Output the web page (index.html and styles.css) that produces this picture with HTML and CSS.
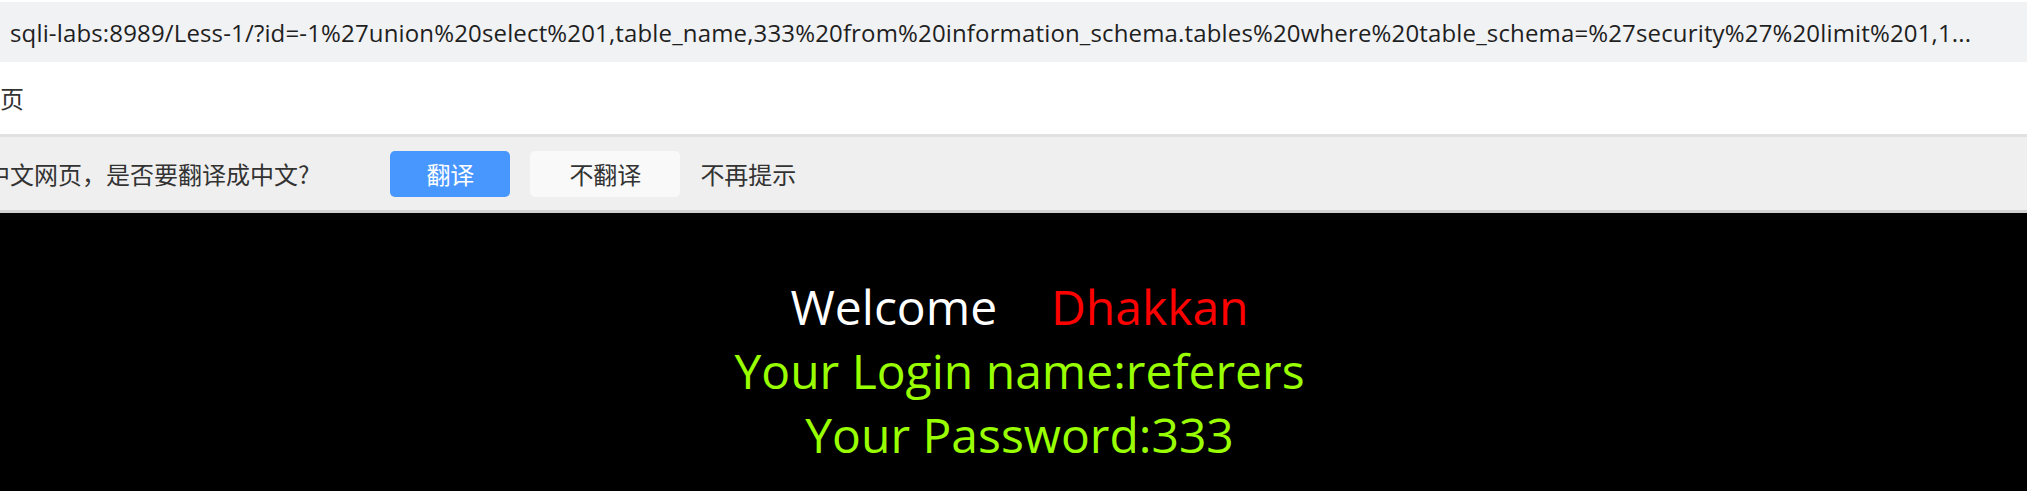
FILE: index.html
```html
<!DOCTYPE html>
<html lang="zh-CN">
<head>
<meta charset="utf-8">
<title>Less-1</title>
<link rel="stylesheet" href="styles.css">
</head>
<body>
<div class="urlbar"><span class="url">sqli-labs:8989/Less-1/?id=-1%27union%20select%201,table_name,333%20from%20information_schema.tables%20where%20table_schema=%27security%27%20limit%201,1...</span></div>
<div class="tabrow"><span class="tabtitle">页</span></div>
<div class="translatebar">
  <span class="prompt">中文网页，是否要翻译成中文?</span>
  <span class="btn btn-primary">翻译</span>
  <span class="btn btn-plain">不翻译</span>
  <span class="never">不再提示</span>
</div>
<div class="page">
  <div class="line welcome">Welcome&nbsp;&nbsp;&nbsp;<span class="red"> Dhakkan </span></div>
  <div class="line green">Your Login name:referers</div>
  <div class="line green">Your Password:333</div>
</div>
</body>
</html>
```
FILE: styles.css
```css
html, body {
  margin: 0;
  padding: 0;
}
body {
  width: 2027px;
  height: 491px;
  overflow: hidden;
  background: #ffffff;
  font-family: "Open Sans", "Noto Sans CJK SC", sans-serif;
}
.urlbar {
  margin-top: 2px;
  height: 60px;
  background: #f1f2f4;
  display: flex;
  align-items: center;
  padding-left: 10px;
  box-sizing: border-box;
}
.url {
  font-size: 24px;
  color: #1f1f1f;
  white-space: nowrap;
  letter-spacing: 0.15px;
}
.tabrow {
  height: 75px;
  display: flex;
  align-items: center;
  padding-bottom: 2px;
  box-sizing: border-box;
  border-bottom: 3px solid #e1e1e1;
}
.tabtitle {
  font-family: "Noto Sans CJK SC", sans-serif;
  font-size: 24px;
  color: #333333;
}
.translatebar {
  height: 73px;
  background: #efefef;
  border-bottom: 3px solid #d2d2d2;
  display: flex;
  align-items: center;
  font-family: "Noto Sans CJK SC", sans-serif;
  font-size: 24px;
  color: #333333;
  margin-left: -14px;
}
.prompt {
  white-space: nowrap;
  margin-right: 81px;
}
.btn {
  height: 46px;
  display: flex;
  align-items: center;
  justify-content: center;
  border-radius: 5px;
  box-sizing: border-box;
}
.btn-primary {
  width: 120px;
  background: #4897fe;
  color: #ffffff;
  margin-right: 20px;
}
.btn-plain {
  width: 150px;
  background: #f9f9f9;
  color: #333333;
  margin-right: 20px;
}
.never {
  white-space: nowrap;
}
.page {
  background: #000000;
  height: 278px;
  padding-top: 62px;
  padding-left: 12px;
  box-sizing: border-box;
  text-align: center;
  font-family: "Open Sans", sans-serif;
  font-size: 48px;
}
.line {
  line-height: 64px;
  white-space: nowrap;
}
.welcome {
  color: #ffffff;
  word-spacing: 1px;
}
.red {
  color: #ff0000;
}
.green {
  color: #99ff00;
}
```
